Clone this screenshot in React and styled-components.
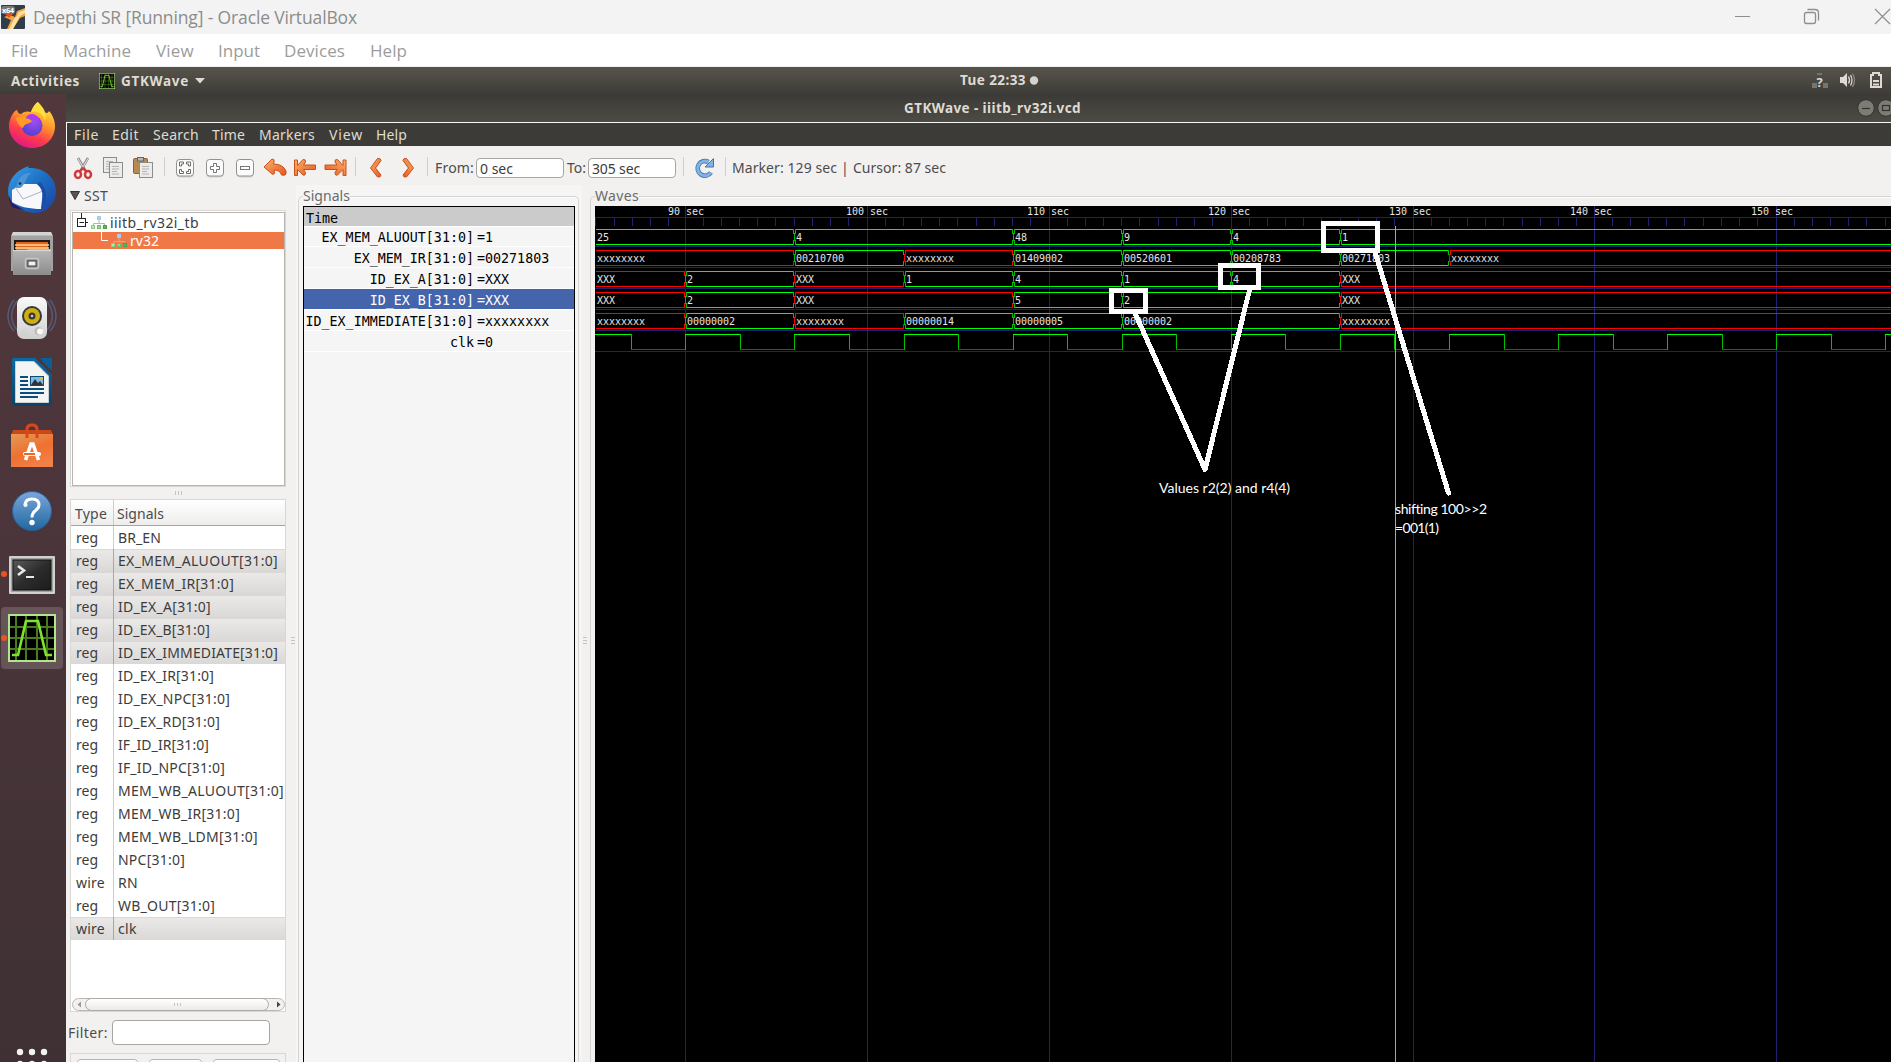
import React, { useLayoutEffect, useRef } from "react";
import styled, { createGlobalStyle, css } from "styled-components";

const UI = '"Noto Sans", "Open Sans", sans-serif';
const MONO = '"DejaVu Sans Mono", "Liberation Mono", monospace';

const GlobalStyle = createGlobalStyle`
  * { box-sizing: border-box; }
  html, body { margin: 0; padding: 0; overflow: hidden; }
  body { font-family: ${UI}; font-size: 14px; color: #4c4c4c; }
  svg { display: block; flex: none; }
`;

/* ---------- text with a fixed advance width ---------- */

const FitBox = styled.span`
  flex: none;
  display: block;
  width: ${(p) => p.$w}px;
  margin-left: ${(p) => p.$ml || 0}px;
  white-space: pre;
  overflow: visible;
`;

function Fit({ w, ml, children }) {
  const ref = useRef(null);
  useLayoutEffect(() => {
    const el = ref.current;
    el.style.letterSpacing = "0px";
    const natural = el.getBoundingClientRect().width;
    el.style.letterSpacing = `${(w - natural) / String(children).length}px`;
  }, [w, children]);
  return (
    <FitBox $w={w} $ml={ml}>
      <span ref={ref}>{children}</span>
    </FitBox>
  );
}

/* ---------- host window ---------- */

const Screen = styled.div`
  width: 1891px;
  height: 1062px;
  display: flex;
  flex-direction: column;
  overflow: hidden;
  background: #f2f1f0;
`;

const HostTitle = styled.div`
  height: 34px;
  flex: none;
  display: flex;
  align-items: center;
  justify-content: space-between;
  background: #f3f3f3;
  color: #8c8c8c;
  font: 17.5px/34px "Open Sans", sans-serif;
  padding-left: 1px;
`;

const HostTitleLeft = styled.div`
  display: flex;
  align-items: center;
`;

const HostControls = styled.div`
  display: flex;
  align-items: center;
`;

const HostMenu = styled.div`
  height: 33px;
  flex: none;
  display: flex;
  padding-left: 11px;
  background: #fff;
  border-bottom: 1px solid #f0f0f0;
  color: #9c9c9c;
  font: 17px/33px "Open Sans", sans-serif;
  font-weight: 400;
`;

/* ---------- guest desktop ---------- */

const TopBar = styled.div`
  height: 27px;
  flex: none;
  display: flex;
  align-items: center;
  background: linear-gradient(#57544b, #3d3c38);
  color: #dfdbd2;
  font-weight: 700;
  font-size: 13.5px;
  line-height: 27px;
  padding-left: 11px;
`;

const TopLeft = styled.div`
  display: flex;
  align-items: center;
  padding-top: 1px;
`;

const Spacer = styled.div`
  flex: none;
  width: ${(p) => p.$w}px;
`;

const Grow = styled.div`
  flex: 1;
`;

const Desktop = styled.div`
  flex: 1;
  min-height: 0;
  display: flex;
`;

const Dock = styled.div`
  width: 66px;
  flex: none;
  display: flex;
  flex-direction: column;
  justify-content: space-between;
  overflow: hidden;
  background: linear-gradient(#52373b 0%, #4a353a 50%, #423236 80%, #3e3033 100%);
`;

const DockApps = styled.div`
  display: flex;
  flex-direction: column;
`;

const Win = styled.div`
  flex: 1;
  min-width: 0;
  display: flex;
  flex-direction: column;
`;

const WinTitle = styled.div`
  height: 28px;
  flex: none;
  display: flex;
  align-items: center;
  background: linear-gradient(#3b3a36, #4d4b44);
  color: #dfdbd2;
  font-weight: 700;
  font-size: 13.5px;
  line-height: 28px;
  overflow: hidden;
`;

const MenuBar = styled.div`
  height: 24px;
  flex: none;
  display: flex;
  border-top: 1px solid #f8f8f6;
  border-left: 1px solid #f8f8f6;
  background: #3c3b37;
  color: #dfdbd2;
  font-size: 14px;
  line-height: 24px;
  padding-left: 7px;
`;

const Toolbar = styled.div`
  height: 39px;
  flex: none;
  display: flex;
  align-items: center;
  padding: 5px 0 0 2px;
  background: #f2f1f0;
  color: #4c4c4c;
  line-height: 19px;
`;

const ToolText = styled.div`
  flex: none;
  display: flex;
  padding-bottom: 2px;
`;

const Slot = styled.div`
  width: ${(p) => p.$w}px;
  height: 34px;
  flex: none;
  display: flex;
  align-items: center;
  justify-content: center;
`;

const Sep = styled.div`
  width: 1px;
  height: 19px;
  background: #d2d0cc;
  margin-top: -3px;
`;

const Entry = styled.div`
  width: ${(p) => p.$w}px;
  height: ${(p) => p.$h || 20}px;
  flex: none;
  display: flex;
  align-items: center;
  border: 1px solid #a9a5a0;
  border-radius: 4px;
  background: #fff;
  padding-left: 3px;
  color: #3c3c3c;
`;

const Panes = styled.div`
  flex: 1;
  min-height: 0;
  display: flex;
`;

/* ---------- SST pane ---------- */

const SstPane = styled.div`
  width: 220px;
  flex: none;
  display: flex;
  flex-direction: column;
`;

const SstHead = styled.div`
  height: 25px;
  flex: none;
  display: flex;
  align-items: center;
  padding: 0 0 5px 4px;
`;

const Well = styled.div`
  margin-left: 4px;
  width: 216px;
  height: ${(p) => p.$h}px;
  flex: none;
  border: 1px solid #d9d7d4;
  background: #fff;
  display: flex;
  flex-direction: column;
  overflow: hidden;
`;

const Tree = styled.div`
  flex: 1;
  margin: 1px 0 0 1px;
  border: 1px solid #b8b4b0;
  display: flex;
  flex-direction: column;
`;

const TreeRow = styled.div`
  height: ${(p) => p.$h}px;
  flex: none;
  display: flex;
  align-items: center;
  line-height: 18px;
  background: ${(p) => (p.$on ? "#f07746" : "#fff")};
  color: ${(p) => (p.$on ? "#fff" : "#3c3c3c")};
  font-size: 14px;
`;

const HGrip = styled.div`
  height: 12px;
  flex: none;
  display: flex;
  gap: 2px;
  align-items: center;
  justify-content: center;
  padding-left: 5px;
`;

const Bar = styled.i`
  display: block;
  width: ${(p) => p.$w}px;
  height: ${(p) => p.$h}px;
  background: #c6c4c0;
`;

const ListHead = styled.div`
  height: 26px;
  flex: none;
  display: flex;
  border-bottom: 1px solid #a8a5a1;
  background: linear-gradient(#fff, #eeedec);
  line-height: 27px;
`;

const TypeCell = styled.div`
  width: 43px;
  flex: none;
  border-right: 1px solid ${(p) => (p.$on ? "#a9a7a4" : "#cfcdca")};
  padding-left: ${(p) => p.$pl || 5}px;
`;

const NameCell = styled.div`
  padding-left: ${(p) => p.$pl || 4}px;
`;

const ListRow = styled.div`
  height: 23px;
  flex: none;
  display: flex;
  line-height: 24px;
  color: #3c3c3c;
  ${(p) =>
    p.$on &&
    css`
      background: linear-gradient(#ebeae9, #dad8d6);
      box-shadow: inset 0 1px #dbd9d7;
    `}
`;

const HScroll = styled.div`
  height: 13px;
  flex: none;
  display: flex;
  align-items: center;
  border: 1px solid #bab7b3;
  border-radius: 7px;
  margin: 0 0 0 1px;
  padding-left: 4px;
  padding-right: 3px;
  background: #f2f1f0;
`;

const Thumb = styled.div`
  width: 184px;
  height: 13px;
  margin: 0 auto 0 3px;
  display: flex;
  gap: 2px;
  align-items: center;
  justify-content: center;
  border: 1px solid #aeaaa6;
  border-radius: 7px;
  background: linear-gradient(#fff, #eceae8);
`;

const FilterRow = styled.div`
  height: 40px;
  flex: none;
  display: flex;
  align-items: center;
  padding: 0 0 2px 2px;
  margin-top: 1px;
`;

const Buttons = styled.div`
  height: 24px;
  flex: none;
  width: 216px;
  margin-left: 4px;
  display: flex;
  gap: 9px;
  padding: 5px 0 0 5px;
  border: 1px solid #d9d7d4;
`;

const Button = styled.div`
  width: ${(p) => p.$w}px;
  height: 24px;
  border: 1px solid #b8b4b0;
  border-radius: 5px;
  background: #fdfdfd;
`;

const VGrip = styled.div`
  width: ${(p) => p.$w}px;
  flex: none;
  display: flex;
  flex-direction: column;
  gap: 2px;
  align-items: flex-end;
  padding: 452px ${(p) => p.$pr}px 0 0;
`;

/* ---------- framed panes ---------- */

const FramePane = styled.div`
  width: ${(p) => p.$w}px;
  flex: none;
  display: flex;
  flex-direction: column;
  background: ${(p) => p.$bg};
  padding-left: ${(p) => p.$pl || 0}px;
  padding-right: ${(p) => p.$pr || 0}px;
`;

const FrameHead = styled.div`
  height: 21px;
  flex: none;
  display: flex;
  align-items: flex-end;
  color: #6a6a6a;
`;

const FrameCorner = styled.div`
  width: 5px;
  height: 10px;
  flex: none;
  border-top: 1px solid #d6d4d0;
  border-left: 1px solid #d6d4d0;
  border-top-left-radius: 5px;
`;

const FrameLine = styled.div`
  flex: 1;
  height: 10px;
  border-top: 1px solid #d6d4d0;
  box-shadow: inset 0 1px #fbfbfa;
  ${(p) =>
    p.$end &&
    css`
      border-right: 1px solid #d6d4d0;
      border-top-right-radius: 5px;
    `}
`;

const FrameLabel = styled.div`
  height: 21px;
  line-height: 21px;
`;

const FrameBody = styled.div`
  flex: 1;
  min-height: 0;
  display: flex;
  border-left: 1px solid #d6d4d0;
  border-right: ${(p) => (p.$end ? "1px solid #d6d4d0" : "none")};
  padding-left: 4px;
  padding-right: ${(p) => (p.$end ? 3 : 0)}px;
`;

const SignalBox = styled.div`
  flex: 1;
  display: flex;
  flex-direction: column;
  border: 1px solid #000;
  border-bottom: 0;
  background: #f5f5f5;
  color: #000;
  font: 13.33px/21px ${MONO};
`;

const TimeRow = styled.div`
  height: 20px;
  flex: none;
  background: #cbcbcb;
  border-bottom: 1px solid #fff;
  padding-left: 2px;
  line-height: 23px;
`;

const SignalRow = styled.div`
  height: ${(p) => p.$h}px;
  flex: none;
  display: flex;
  border-bottom: 1px solid #fff;
  white-space: pre;
  line-height: ${(p) => p.$h * 2 - 19}px;
  background: ${(p) => (p.$on ? "#4464ac" : "transparent")};
  color: ${(p) => (p.$on ? "#fff" : "#000")};
`;

const SignalName = styled.div`
  width: 170px;
  text-align: right;
`;

const SignalValue = styled.div`
  padding-left: 3px;
`;

/* ---------- icons ---------- */

const VBoxIcon = () => (
  <svg width="24" height="24" viewBox="0 0 24 24">
    <rect width="24" height="24" rx="1" fill="#323d4c" />
    <path d="M6 24 L10 15 L3 12 L9 10 L14 12 L16 6 L24 3 V11 L19 13 L12 24 Z" fill="#f6a53c" />
    <path d="M8 24 L13 14 L16 11 L18 7 L24 5 V8 L19 11 L12 24 Z" fill="#fde2a8" />
    <path d="M4 9 L8 13 L12 9 Z" fill="#e0531c" />
    <rect x="0" y="1" width="14" height="8" rx="3" fill="#777" />
    <text x="1" y="8" fontSize="7.5" fontWeight="700" fill="#fff" fontFamily="Open Sans" textLength="12">x64</text>
  </svg>
);

const WaveIcon = ({ size }) => (
  <svg width={size} height={size} viewBox="0 0 48 48">
    <rect width="48" height="48" fill="#b2e68a" />
    <rect x="2" y="2" width="44" height="44" fill="#000" />
    <path d="M8 2V46M18 2V46M29 2V46M39 2V46M2 13H46M2 24H46M2 35H46" stroke="#4a7a1e" strokeWidth="2" />
    <path d="M4 41H10L18 7H30L38 41H44" stroke="#7fe22f" strokeWidth="2.6" fill="none" />
  </svg>
);

const DockIcon = ({ children }) => (
  <svg width="66" height="64" viewBox="0 0 66 64">{children}</svg>
);

const Firefox = () => (
  <DockIcon>
    <defs>
      <linearGradient id="ffb" x1="0.8" y1="0" x2="0.3" y2="1">
        <stop offset="0" stopColor="#fff04a" />
        <stop offset=".4" stopColor="#ff9a2a" />
        <stop offset=".7" stopColor="#ff3d4d" />
        <stop offset="1" stopColor="#e01586" />
      </linearGradient>
      <radialGradient id="ffg" cx=".6" cy=".3" r=".8">
        <stop offset="0" stopColor="#a04cf5" />
        <stop offset="1" stopColor="#4a3fc8" />
      </radialGradient>
    </defs>
    <path d="M17 16 C18 19 19 20 21 20 C24 17 28 17 31 18 C33 12 36 9 38 8 C38 12 41 14 43 17 C47 20 48 19 49 17 C52 20 55 26 55 32 C55 45 45 54 32 54 C19 54 9 44 9 32 C9 26 12 20 15 17 Z" fill="url(#ffb)" />
    <path d="M31 18 C38 16 43 20 45 27 C47 19 44 14 38 8 C36 9 33 13 31 18Z" fill="#ffdf3c" />
    <circle cx="32" cy="31.500" r="10.500" fill="url(#ffg)" />
    <path d="M16 24 C20 22 25 21 32 27 C30 30 24 29 23 34 C20 33 17 29 16 24Z" fill="#ff9b22" />
    <path d="M26 25 C31 23 36 26 40 28 C38 20 32 19 28 21 Z" fill="#b03af0" />
  </DockIcon>
);

const Thunderbird = () => (
  <DockIcon>
    <defs>
      <linearGradient id="tb" x1="0" y1="0" x2="1" y2="1">
        <stop offset="0" stopColor="#3aa0e8" />
        <stop offset=".5" stopColor="#1a6ec2" />
        <stop offset="1" stopColor="#1d3f9e" />
      </linearGradient>
    </defs>
    <path d="M8 34 C8 22 16 12 29 8 L28 10 C44 9 56 20 56 33 C56 45 48 53 38 55 C26 55 9 50 8 34Z" fill="url(#tb)" />
    <path d="M9 38 L12 45 L24 52 L14 50 C10 47 9 42 9 38Z" fill="#2a1a66" />
    <path d="M12 32 L22 26 L37 26 L43 31 L41 51 C30 51 20 49 12 44 Z" fill="#f8f8fb" />
    <path d="M15 29 L23 41 L43 33" stroke="#aab2c8" strokeWidth="1" fill="none" />
    <path d="M16 30 C18 20 23 14 31 15 C25 19 26 27 20 30 Z" fill="#4b96d4" />
    <path d="M37 26 C42 30 45 38 41 51 C48 44 48 32 40 24 Z" fill="#1b4ca8" />
    <circle cx="20" cy="25.500" r="1.300" fill="#102a50" />
  </DockIcon>
);

const Files = () => (
  <DockIcon>
    <defs>
      <linearGradient id="fl" x1="0" y1="0" x2="0" y2="1">
        <stop offset="0" stopColor="#b8b8b8" />
        <stop offset="1" stopColor="#8c8c8c" />
      </linearGradient>
    </defs>
    <path d="M13 10H51L53 14V49H11V14Z" fill="#a2a2a2" />
    <path d="M13 10H51L52.500 13.500H11.500Z" fill="#d4d4d4" />
    <rect x="14" y="18" width="36" height="12" fill="#1d1a18" />
    <rect x="16" y="20" width="32" height="9" fill="#e0631e" />
    <path d="M15 23H49M15 26H49" stroke="#f8d79a" strokeWidth="1.300" />
    <path d="M13 28H26L29 27H51V53H13Z" fill="url(#fl)" />
    <path d="M13 28.500H51" stroke="#d8d8d8" />
    <rect x="25.500" y="36.500" width="13" height="10" rx="2" fill="#8e8e8e" stroke="#c8c8c8" strokeWidth="1.500" />
    <rect x="28" y="39" width="8" height="5" fill="#f2f2f2" stroke="#3a3a3a" />
  </DockIcon>
);

const Rhythmbox = () => (
  <DockIcon>
    <defs>
      <linearGradient id="rb" x1="0" y1="0" x2="0" y2="1">
        <stop offset="0" stopColor="#fafafa" />
        <stop offset="1" stopColor="#cfcfcf" />
      </linearGradient>
    </defs>
    <g transform="translate(0 2)">
      <path d="M14 12C6 22 6 34 14 43M17 13C10 23 10 33 17 42M50 12C58 22 58 34 50 43M47 13C54 23 54 33 47 42" stroke="#5b6f96" strokeWidth="1.500" fill="none" opacity=".65" />
      <rect x="17" y="9" width="30" height="42" rx="7" fill="url(#rb)" />
      <circle cx="32" cy="28" r="10" fill="#35373a" />
      <circle cx="32" cy="28" r="8" fill="#cfae14" />
      <circle cx="32" cy="28" r="3.500" fill="#3a3a35" />
      <circle cx="32" cy="28" r="1.300" fill="#c8c8c8" />
      <circle cx="38.500" cy="43" r="4" fill="#bdbdb8" />
      <circle cx="40" cy="43.500" r="3" fill="#f8f8f8" />
      <circle cx="24.500" cy="44" r="2.300" fill="none" stroke="#d0d0d0" />
    </g>
  </DockIcon>
);

const Writer = () => (
  <DockIcon>
    <defs>
      <linearGradient id="wr" x1="0" y1="0" x2="0" y2="1">
        <stop offset="0" stopColor="#0a69a5" />
        <stop offset="1" stopColor="#0b4368" />
      </linearGradient>
    </defs>
    <path d="M14 8H35L52 25V53Q52 56 49 56H15Q12 56 12 53V10Q12 8 14 8Z" fill="url(#wr)" />
    <path d="M40 8H52V20Q46 16 40 8Z" fill="#0a5f97" />
    <path d="M15.500 11.500H34L48.500 26V52.500H15.500Z" fill="#f4f4f4" stroke="#cfcfcf" />
    <path d="M20 27H28M20 31H28M20 35H28M20 39H44M20 43H44M20 47H38" stroke="#0b4e7c" strokeWidth="2" />
    <rect x="30.500" y="26.500" width="13" height="9" fill="#7cbcea" stroke="#0b4e7c" />
    <path d="M31 35L35 29L38 33L40 31L43 35Z" fill="#333" />
    <circle cx="41.500" cy="28.500" r="1.300" fill="#e8c81a" />
  </DockIcon>
);

const Software = () => (
  <DockIcon>
    <defs>
      <linearGradient id="sw" x1="0" y1="0" x2=".5" y2="1">
        <stop offset="0" stopColor="#e49a56" />
        <stop offset=".6" stopColor="#ef7030" />
        <stop offset="1" stopColor="#f27f45" />
      </linearGradient>
    </defs>
    <path d="M13 16H51L53 21H11Z" fill="#c9481a" />
    <rect x="11" y="20" width="42" height="33" fill="url(#sw)" />
    <path d="M27 24V15Q27 11 32 11Q37 11 37 15V24" stroke="#d8481a" strokeWidth="3" fill="none" />
    <path d="M25.500 46L31 30H33L38.500 46" stroke="#fff" strokeWidth="3.600" fill="none" />
    <rect x="23" y="38" width="18" height="4" rx="2" fill="#fff" />
    <rect x="24" y="39" width="11" height="2" fill="#ef6a1e" />
  </DockIcon>
);

const HelpIcon = () => (
  <DockIcon>
    <defs>
      <linearGradient id="hp" x1="0" y1="0" x2="0" y2="1">
        <stop offset="0" stopColor="#7aa6dc" />
        <stop offset="1" stopColor="#2068a0" />
      </linearGradient>
    </defs>
    <circle cx="32" cy="33" r="19.500" fill="url(#hp)" stroke="#2b5f96" />
    <path d="M25 27Q25.500 21 32 21Q39 21 39 27Q39 30 35 33Q32 35.500 32 39.500" stroke="#fff" strokeWidth="3" fill="none" />
    <circle cx="25.500" cy="27" r="2" fill="#fff" />
    <circle cx="32" cy="44.500" r="2.700" fill="#fff" />
  </DockIcon>
);

const Terminal = () => (
  <DockIcon>
    <defs>
      <linearGradient id="tm" x1="0" y1="0" x2="1" y2="1">
        <stop offset="0" stopColor="#5a5a5a" />
        <stop offset=".5" stopColor="#2c2c2c" />
        <stop offset="1" stopColor="#1c1c1c" />
      </linearGradient>
    </defs>
    <g transform="translate(0 -3)">
      <circle cx="4" cy="35" r="3" fill="#e95420" />
      <rect x="9" y="17" width="46" height="38" rx="1" fill="#d0d0d0" />
      <rect x="11" y="19" width="42" height="34" fill="#a2a2a2" />
      <rect x="13" y="21" width="38" height="30" fill="url(#tm)" stroke="#111" />
      <path d="M18 27L24 31.500L18 36" stroke="#e8e8e8" strokeWidth="2.600" fill="none" />
      <rect x="26" y="37" width="8" height="2" fill="#e8e8e8" />
    </g>
  </DockIcon>
);

const GtkWaveDock = () => (
  <DockIcon>
    <rect x="1" y="1" width="62" height="62" rx="4" fill="#fff" opacity=".16" />
    <circle cx="4" cy="32" r="3" fill="#e95420" />
    <g transform="translate(8 8)">
      <WaveIcon size={48} />
    </g>
  </DockIcon>
);

const AppGrid = () => (
  <svg width="66" height="16" viewBox="0 0 66 16">
    {[20, 32, 44].map((x) => (
      <g key={x} fill="#f2f2f2">
        <circle cx={x} cy="6" r="3.200" />
        <circle cx={x} cy="18" r="3.200" />
      </g>
    ))}
  </svg>
);

const Cut = () => (
  <svg width="20" height="24" viewBox="0 0 20 24">
    <path d="M5 2L12.500 15" stroke="#8e8e8e" strokeWidth="2.600" />
    <path d="M15 2L7.500 15" stroke="#8e8e8e" strokeWidth="2.600" />
    <path d="M5 2.500L12 14.500M15 2.500L8 14.500" stroke="#e4e4e4" strokeWidth="1" />
    <ellipse cx="5" cy="18.500" rx="3" ry="3.500" fill="none" stroke="#cc3a3e" strokeWidth="2.500" />
    <ellipse cx="15" cy="18.500" rx="3" ry="3.500" fill="none" stroke="#cc3a3e" strokeWidth="2.500" />
    <path d="M6.500 15.500L10 12L13.500 15.500" stroke="#cc3a3e" strokeWidth="2.200" fill="none" />
  </svg>
);

const Sheet = ({ x, y }) => (
  <g transform={`translate(${x} ${y})`}>
    <rect x=".5" y=".5" width="13" height="15" fill="#ececea" stroke="#8b8d88" />
    <path d="M3 4.500H10M3 7H10M3 9.500H8M3 12H10" stroke="#b4b4b2" />
  </g>
);

const Copy = () => (
  <svg width="20" height="24" viewBox="0 0 20 24">
    <Sheet x={0} y={1} />
    <Sheet x={6} y={6} />
  </svg>
);

const Paste = () => (
  <svg width="20" height="24" viewBox="0 0 20 24">
    <rect x=".5" y="2.500" width="14" height="15" rx="1" fill="#b48a52" stroke="#866235" />
    <rect x="4.500" y="1.500" width="6" height="3.500" fill="#b8b8b8" stroke="#666" />
    <Sheet x={6} y={6} />
  </svg>
);

const ZoomBox = ({ kind }) => (
  <svg width="20" height="22" viewBox="0 0 20 22">
    <rect x="1.500" y="3" width="17" height="17.500" rx="3.500" fill="#d4d2ce" />
    <rect x="1.500" y="2.500" width="17" height="16.500" rx="3" fill="#fbfbfb" stroke="#93918d" />
    {kind === "fit" && (
      <path
        d="M4.500 9V5H8.500V7H6.500V9ZM11.500 5H15.500V9H13.500V7H11.500ZM4.500 12.500V16.500H8.500V14.500H6.500V12.500ZM15.500 12.500V16.500H11.500V14.500H13.500V12.500Z"
        fill="#fff"
        stroke="#6e6c69"
        strokeWidth="1"
      />
    )}
    {kind === "in" && (
      <path d="M8.500 6.500H11.500V9.500H14.500V12.500H11.500V15.500H8.500V12.500H5.500V9.500H8.500Z" fill="#fff" stroke="#777572" />
    )}
    {kind === "out" && <rect x="5.500" y="9.500" width="9" height="3" fill="#fff" stroke="#777572" />}
  </svg>
);

const OrangeDefs = () => (
  <defs>
    <linearGradient id="or" x1="0" y1="0" x2="1" y2="1">
      <stop offset="0" stopColor="#f7b56e" />
      <stop offset="1" stopColor="#e8541c" />
    </linearGradient>
  </defs>
);

const orange = { fill: "url(#or)", stroke: "#c9501e", strokeWidth: 1, strokeLinejoin: "round" };

const Undo = () => (
  <svg width="24" height="22" viewBox="0 0 24 22">
    <OrangeDefs />
    <path d="M1 10L9 2Q12 2 11 5L10.500 7Q20 7 23 14V17Q22 19 18.500 18Q17 13 11 13L11.500 16Q11 18 9 17Z" {...orange} />
  </svg>
);

const first = "M1 3H4V8.500L9.500 2.500Q12.500 2 12 5L10 8H22V12.500H10L12 15.500Q12 19 9.500 18L4 12.500V18.500H1Z";

const First = () => (
  <svg width="24" height="22" viewBox="0 0 24 22">
    <path d={first} transform="translate(.5 0)" {...orange} />
  </svg>
);

const Last = () => (
  <svg width="24" height="22" viewBox="0 0 24 22">
    <path d={first} transform="matrix(-1 0 0 1 24 0)" {...orange} />
  </svg>
);

const Chevron = ({ flip }) => (
  <svg width="14" height="22" viewBox="0 0 14 22">
    <path
      d="M1.500 11L8.500 1.500Q12 1 12 3.500L6.500 11L12 18Q12 20.500 8.500 20Z"
      transform={flip ? "matrix(-1 0 0 1 14 0)" : undefined}
      {...orange}
    />
  </svg>
);

const Reload = () => (
  <svg width="22" height="22" viewBox="0 0 22 22">
    <path d="M17 15.500A7.300 7.300 0 1 1 14.500 5" stroke="#3f76b4" strokeWidth="4.600" fill="none" />
    <path d="M17 15.500A7.300 7.300 0 1 1 14.500 5" stroke="#82b2e0" strokeWidth="3" fill="none" />
    <path d="M19.500 1.500V10H11L14 7Z" fill="#82b2e0" stroke="#3f76b4" />
  </svg>
);

const Hierarchy = () => (
  <svg width="16" height="14" viewBox="0 0 16 14">
    <rect x="6" y="0" width="4" height="4" fill="#a4cdf4" />
    <path d="M8 4V8M2.500 9V7.500H13.500V9" stroke="#b4b4b4" fill="none" />
    <rect x=".5" y="9.500" width="3" height="3" fill="#b6e6ac" stroke="#8ccf80" />
    <rect x="6.500" y="9.500" width="3" height="3" fill="#98d88c" stroke="#6cc060" />
    <rect x="12.500" y="9.500" width="3" height="3" fill="#5cb858" stroke="#44a446" />
  </svg>
);

const Expander = () => (
  <svg width="14" height="19" viewBox="0 0 14 19">
    <path d="M7.500 0V5M12 9.500H14" stroke="#222" />
    <rect x="3.500" y="5.500" width="8" height="8" fill="#fff" stroke="#222" />
    <path d="M5.500 9.500H10" stroke="#222" />
  </svg>
);

const Branch = () => (
  <svg width="10" height="17" viewBox="0 0 10 17">
    <path d="M1.500 0V8.500H8" stroke="#fff" fill="none" />
  </svg>
);

const WinButton = ({ kind }) => (
  <svg width="20" height="20" viewBox="0 0 20 20">
    <circle cx="10" cy="10" r="8.300" fill="#7d7b74" stroke="#33322e" />
    {kind === "min" ? (
      <path d="M6 10.500H14" stroke="#33322e" strokeWidth="1.200" />
    ) : (
      <rect x="6.500" y="7.500" width="7" height="5" fill="none" stroke="#33322e" strokeWidth="1.200" />
    )}
  </svg>
);

/* ---------- waveform ---------- */

const MAJORS = [
  [685, "90", 668],
  [867, "100", 846],
  [1049, "110", 1027],
  [1231, "120", 1208],
  [1413, "130", 1389],
  [1594, "140", 1570],
  [1776, "150", 1751],
];
const MINOR = [18, 36, 54, 72, 90, 109, 127, 145, 163];
const LEAD = [595, 614, 632, 650, 668];
const ROWS = [
  [[595, "25", 0], [794, "4", 0], [1013, "48", 0], [1122, "9", 0], [1231, "4", 0], [1340, "1", 0]],
  [[595, "xxxxxxxx", 1], [794, "00210700", 0], [904, "xxxxxxxx", 1], [1013, "01409002", 0], [1122, "00520601", 0], [1231, "00208783", 0], [1340, "00271803", 0], [1449, "xxxxxxxx", 1]],
  [[595, "XXX", 1], [685, "2", 0], [794, "XXX", 1], [904, "1", 0], [1013, "4", 0], [1122, "1", 0], [1231, "4", 0], [1340, "XXX", 1]],
  [[595, "XXX", 1], [685, "2", 0], [794, "XXX", 1], [1013, "5", 0], [1122, "2", 0], [1340, "XXX", 1]],
  [[595, "xxxxxxxx", 1], [685, "00000002", 0], [794, "xxxxxxxx", 1], [904, "00000014", 0], [1013, "00000005", 0], [1122, "00000002", 0], [1340, "xxxxxxxx", 1]],
];
const RISES = [576, 685, 794, 904, 1013, 1122, 1231, 1340, 1449, 1558, 1667, 1776, 1885];
const FALLS = [631, 740, 849, 958, 1067, 1176, 1285, 1394, 1504, 1613, 1722, 1831, 1940];
const GRID = "#202070";
const tone = (bad) => (bad ? "#ff0000" : "#00ff00");
const edge = (bad) => (bad ? "#ff0000" : "#00c000");

const WaveSvg = styled.svg`
  background: #000;
  shape-rendering: crispEdges;
  font: 10px ${MONO};
`;

const NoteText = styled.text`
  font: 14px Lato, Calibri, sans-serif;
  fill: #fff;
`;

function BusRow({ segs, top }) {
  return segs.map(([x, label, bad], i) => {
    const end = i + 1 < segs.length ? segs[i + 1][0] : 1893;
    const start = x + 1;
    return (
      <g key={i}>
        <rect x={start} y={top} width={end - start} height="1" fill={tone(bad)} />
        <rect x={start} y={top + 15} width={end - start} height="1" fill={tone(bad)} />
        {i > 0 && (
          <g fill={edge(bad)}>
            <rect x={x + 1} y={top} width="1" height="5" />
            <rect x={x} y={top + 4} width="1" height="8" />
            <rect x={x + 1} y={top + 11} width="1" height="5" />
            <g fill={edge(segs[i - 1][2])}>
              <rect x={x - 1} y={top} width="1" height="5" />
              <rect x={x - 1} y={top + 11} width="1" height="5" />
            </g>
          </g>
        )}
        <text x={x + 2} y={top + 12} fill="#e6e6e6" textLength={label.length * 6}>{label}</text>
      </g>
    );
  });
}

function Waves() {
  return (
    <WaveSvg width="1296" height="856" viewBox="595 206 1296 856">
      <g fill={GRID}>
        <rect x="595" y="217" width="1296" height="1" />
        {MAJORS.map(([x]) => <rect key={x} x={x} y="206" width="1" height="856" />)}
        {LEAD.map((x) => <rect key={x} x={x} y="218" width="1" height="8" />)}
        {MAJORS.map(([x]) => MINOR.map((d) => <rect key={x + d} x={x + d} y="218" width="1" height="8" />))}
        {[246, 267, 288, 309, 330, 351].map((y) => <rect key={y} x="595" y={y} width="1296" height="1" />)}
      </g>
      {MAJORS.map(([x, n, tx]) => (
        <text key={x} x={tx} y="215" fill="#e6e6e6" textLength={(n.length + 4) * 6}>{`${n} sec`}</text>
      ))}
      {ROWS.map((segs, i) => <BusRow key={i} segs={segs} top={229 + i * 21} />)}
      {RISES.map((x, i) => (
        <g key={x}>
          <rect x={x} y="334" width="1" height="16" fill="#00c000" />
          <rect x={FALLS[i]} y="334" width="1" height="16" fill="#00c000" />
          <rect x={x} y="334" width={FALLS[i] - x} height="1" fill="#00ff00" />
          <rect x={FALLS[i]} y="349" width={(RISES[i + 1] || 1950) - FALLS[i]} height="1" fill="#008000" />
        </g>
      ))}
      <rect x="1395" y="226" width="1" height="836" fill="#ff8080" />
      <g fill="none" stroke="#fff" strokeWidth="5">
        <rect x="1323.500" y="223.500" width="54" height="27" />
        <rect x="1220.500" y="265.500" width="38" height="22" />
        <rect x="1111.500" y="290.500" width="34" height="21" />
        <g strokeLinecap="round" strokeLinejoin="round">
          <path d="M1135 313L1205 469.500L1250 288" />
          <path d="M1375 252L1448.500 493" />
        </g>
      </g>
      <NoteText x="1159" y="493" textLength="131">Values r2(2) and r4(4)</NoteText>
      <NoteText x="1395" y="514" textLength="92">shifting 100&gt;&gt;2</NoteText>
      <NoteText x="1395" y="532.500" textLength="44">=001(1)</NoteText>
    </WaveSvg>
  );
}

/* ---------- data ---------- */

const HOST_MENU = [["File", 27, 0], ["Machine", 68, 25], ["View", 38, 25], ["Input", 42, 24], ["Devices", 61, 24], ["Help", 37, 25]];
const APP_MENU = [["File", 25, 0], ["Edit", 27, 13], ["Search", 46, 14], ["Time", 33, 13], ["Markers", 56, 14], ["View", 34, 14], ["Help", 31, 13]];
const LIST = [
  ["reg", "BR_EN", 43, 0],
  ["reg", "EX_MEM_ALUOUT[31:0]", 160, 1],
  ["reg", "EX_MEM_IR[31:0]", 116, 1],
  ["reg", "ID_EX_A[31:0]", 93, 1],
  ["reg", "ID_EX_B[31:0]", 92, 1],
  ["reg", "ID_EX_IMMEDIATE[31:0]", 160, 1],
  ["reg", "ID_EX_IR[31:0]", 96, 0],
  ["reg", "ID_EX_NPC[31:0]", 112, 0],
  ["reg", "ID_EX_RD[31:0]", 102, 0],
  ["reg", "IF_ID_IR[31:0]", 91, 0],
  ["reg", "IF_ID_NPC[31:0]", 107, 0],
  ["reg", "MEM_WB_ALUOUT[31:0]", 166, 0],
  ["reg", "MEM_WB_IR[31:0]", 122, 0],
  ["reg", "MEM_WB_LDM[31:0]", 140, 0],
  ["reg", "NPC[31:0]", 67, 0],
  ["wire", "RN", 20, 0],
  ["reg", "WB_OUT[31:0]", 97, 0],
  ["wire", "clk", 19, 1],
];
const SIGNALS = [
  ["EX_MEM_ALUOUT[31:0]", "=1"],
  ["EX_MEM_IR[31:0]", "=00271803"],
  ["ID_EX_A[31:0]", "=XXX"],
  ["ID_EX_B[31:0]", "=XXX", true],
  ["ID_EX_IMMEDIATE[31:0]", "=xxxxxxxx"],
  ["clk", "=0"],
];

const Bars = ({ w, h }) => (
  <>
    <Bar $w={w} $h={h} />
    <Bar $w={w} $h={h} />
    <Bar $w={w} $h={h} />
  </>
);

export default function App() {
  return (
    <Screen>
      <GlobalStyle />
      <HostTitle>
        <HostTitleLeft>
          <VBoxIcon />
          <Fit w={324} ml={8}>Deepthi SR [Running] - Oracle VirtualBox</Fit>
        </HostTitleLeft>
        <HostControls>
          <svg width="157" height="34" viewBox="1734 0 157 34" fill="none" stroke="#8e8e8e">
            <path d="M1735 16.500H1750" />
            <rect x="1804.500" y="12.500" width="11" height="11" rx="2" strokeWidth="1.300" />
            <path d="M1807.500 9.500H1815Q1818.500 9.500 1818.500 13V20.500" strokeWidth="1.300" />
            <path d="M1875 9L1890 24M1890 9L1875 24" strokeWidth="1.200" />
          </svg>
        </HostControls>
      </HostTitle>
      <HostMenu>
        {HOST_MENU.map(([t, w, ml]) => <Fit key={t} w={w} ml={ml}>{t}</Fit>)}
      </HostMenu>
      <TopBar>
        <TopLeft>
          <Fit w={69}>Activities</Fit>
          <Spacer $w={19} />
          <WaveIcon size={16} />
          <Fit w={68} ml={6}>GTKWave</Fit>
          <Spacer $w={6} />
          <svg width="10" height="6" viewBox="0 0 10 6"><path d="M0 0H10L5 5.500Z" fill="#dfdbd2" /></svg>
        </TopLeft>
        <Grow />
        <Fit w={66}>Tue 22:33</Fit>
        <Spacer $w={3} />
        <svg width="10" height="9" viewBox="0 0 10 9"><circle cx="5" cy="4.500" r="4.200" fill="#d6d3cc" /></svg>
        <Spacer $w={773} />
        <svg width="79" height="27" viewBox="1812 67 79 27">
          <g fill="#77756e">
            <rect x="1817" y="73" width="5" height="2" />
            <rect x="1812" y="83" width="5" height="5" />
            <rect x="1823" y="83" width="5" height="5" />
          </g>
          <text x="1816.500" y="87" fontSize="13" fontFamily="Noto Sans" fontWeight="700" fill="#dfdbd2">?</text>
          <path d="M1840 77H1843L1847 73V87L1843 83H1840Z" fill="#dfdbd2" />
          <path d="M1848.500 76.500Q1850.500 80 1848.500 83.500M1850.500 75Q1853.500 80 1850.500 85.500" stroke="#dfdbd2" strokeWidth="1.300" fill="none" />
          <path d="M1852.500 73.500Q1856.500 80 1852.500 87" stroke="#8a8780" strokeWidth="1.300" fill="none" />
          <path d="M1871 75H1873V73H1879V75H1881V87H1871Z" fill="none" stroke="#dfdbd2" strokeWidth="2" />
          <path d="M1873 81H1879M1873 84.500H1879" stroke="#dfdbd2" strokeWidth="1.800" />
        </svg>
      </TopBar>
      <Desktop>
        <Dock>
          <DockApps>
            <Firefox />
            <Thunderbird />
            <Files />
            <Rhythmbox />
            <Writer />
            <Software />
            <HelpIcon />
            <Terminal />
            <GtkWaveDock />
          </DockApps>
          <AppGrid />
        </Dock>
        <Win>
          <WinTitle>
            <Fit w={177} ml={838}>GTKWave - iiitb_rv32i.vcd</Fit>
            <Spacer $w={775} />
            <WinButton kind="min" />
            <WinButton kind="max" />
          </WinTitle>
          <MenuBar>
            {APP_MENU.map(([t, w, ml]) => <Fit key={t} w={w} ml={ml}>{t}</Fit>)}
          </MenuBar>
          <Toolbar>
            <Slot $w={30}><Cut /></Slot>
            <Slot $w={30}><Copy /></Slot>
            <Slot $w={30}><Paste /></Slot>
            <Slot $w={12}><Sep /></Slot>
            <Slot $w={30}><ZoomBox kind="fit" /></Slot>
            <Slot $w={30}><ZoomBox kind="in" /></Slot>
            <Slot $w={30}><ZoomBox kind="out" /></Slot>
            <Slot $w={30}><Undo /></Slot>
            <Slot $w={30}><First /></Slot>
            <Slot $w={30}><Last /></Slot>
            <Slot $w={11}><Sep /></Slot>
            <Slot $w={30}><Chevron /></Slot>
            <Slot $w={34}><Chevron flip /></Slot>
            <Slot $w={5}><Sep /></Slot>
            <ToolText><Fit w={39} ml={5}>From:</Fit></ToolText>
            <Spacer $w={2} />
            <Entry $w={88}><Fit w={33}>0 sec</Fit></Entry>
            <ToolText><Fit w={19} ml={3}>To:</Fit></ToolText>
            <Spacer $w={2} />
            <Entry $w={88}><Fit w={48}>305 sec</Fit></Entry>
            <Slot $w={15}><Sep /></Slot>
            <Slot $w={27}><Reload /></Slot>
            <Slot $w={14}><Sep /></Slot>
            <ToolText>
              <Fit w={105}>Marker: 129 sec</Fit>
              <Fit w={5} ml={4}>|</Fit>
              <Fit w={93} ml={7}>Cursor: 87 sec</Fit>
            </ToolText>
          </Toolbar>
          <Panes>
            <SstPane>
              <SstHead>
                <svg width="10" height="9" viewBox="0 0 10 9"><path d="M.5 .5H9.500L5 8.500Z" fill="#555" stroke="#333" /></svg>
                <Fit w={24} ml={4}>SST</Fit>
              </SstHead>
              <Well $h={277}>
                <Tree>
                  <TreeRow $h={19}>
                    <Spacer $w={1} />
                    <Expander />
                    <Spacer $w={3} />
                    <Hierarchy />
                    <Fit w={89} ml={3}>iiitb_rv32i_tb</Fit>
                  </TreeRow>
                  <TreeRow $h={17} $on>
                    <Spacer $w={27} />
                    <Branch />
                    <Spacer $w={1} />
                    <Hierarchy />
                    <Fit w={29} ml={3}>rv32</Fit>
                  </TreeRow>
                </Tree>
              </Well>
              <HGrip><Bars w={1} h={4} /></HGrip>
              <Well $h={513}>
                <ListHead>
                  <TypeCell $pl={4}><Fit w={32}>Type</Fit></TypeCell>
                  <NameCell $pl={3}><Fit w={47}>Signals</Fit></NameCell>
                </ListHead>
                {LIST.map(([t, n, w, on]) => (
                  <ListRow key={n} $on={on}>
                    <TypeCell $on={on}><Fit w={t === "reg" ? 22 : 29}>{t}</Fit></TypeCell>
                    <NameCell><Fit w={w}>{n}</Fit></NameCell>
                  </ListRow>
                ))}
                <Grow />
                <HScroll>
                  <svg width="5" height="7" viewBox="0 0 5 7"><path d="M4 .5V6.500L.5 3.500Z" fill="#999" /></svg>
                  <Thumb><Bars w={1} h={3} /></Thumb>
                  <svg width="5" height="7" viewBox="0 0 5 7"><path d="M1 .5V6.500L4.500 3.500Z" fill="#444" /></svg>
                </HScroll>
              </Well>
              <FilterRow>
                <Fit w={40}>Filter:</Fit>
                <Spacer $w={4} />
                <Entry $w={158} $h={25} />
              </FilterRow>
              <Buttons>
                <Button $w={63} />
                <Button $w={55} />
                <Button $w={69} />
              </Buttons>
            </SstPane>
            <VGrip $w={10} $pr={1}><Bars w={4} h={1} /></VGrip>
            <FramePane $w={286} $bg="#f5f5f5" $pl={2} $pr={3}>
              <FrameHead>
                <FrameCorner />
                <FrameLabel><Fit w={47}>Signals</Fit></FrameLabel>
                <FrameLine $end />
              </FrameHead>
              <FrameBody $end>
                <SignalBox>
                  <TimeRow>Time</TimeRow>
                  {SIGNALS.map(([n, v, on], i) => (
                    <SignalRow key={n} $on={on} $h={i ? 21 : 20}>
                      <SignalName>{n}</SignalName>
                      <SignalValue>{v}</SignalValue>
                    </SignalRow>
                  ))}
                </SignalBox>
              </FrameBody>
            </FramePane>
            <VGrip $w={8} $pr={3}><Bars w={4} h={1} /></VGrip>
            <FramePane $w={1301} $bg="#f2f1f0">
              <FrameHead>
                <FrameCorner />
                <FrameLabel><Fit w={44}>Waves</Fit></FrameLabel>
                <FrameLine />
              </FrameHead>
              <FrameBody>
                <Waves />
              </FrameBody>
            </FramePane>
          </Panes>
        </Win>
      </Desktop>
    </Screen>
  );
}
